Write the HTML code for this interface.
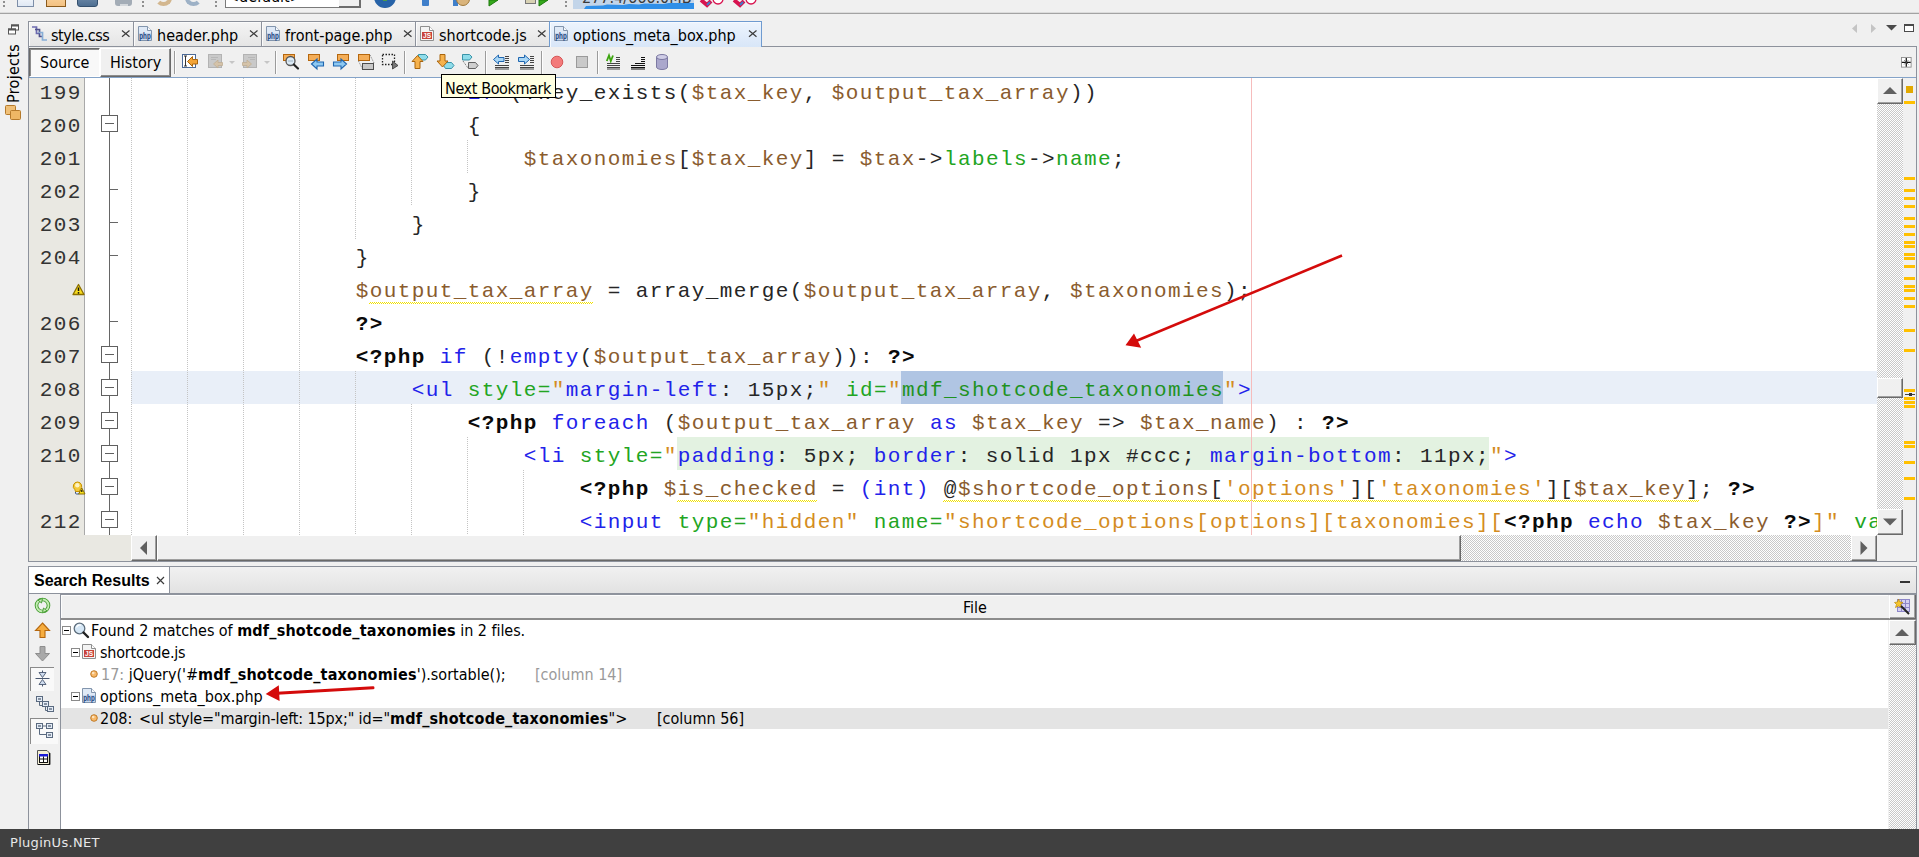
<!DOCTYPE html>
<html lang="en">
<head>
<meta charset="utf-8">
<title>NetBeans - options_meta_box.php</title>
<style>
*{box-sizing:border-box;margin:0;padding:0}
html,body{width:1919px;height:857px;overflow:hidden;background:#f0f0f0}
body{position:relative;font-family:"DejaVu Sans Condensed","Liberation Sans",sans-serif;font-size:16px;color:#000}
.abs{position:absolute}
.ui{font-family:"DejaVu Sans Condensed","Liberation Sans",sans-serif;font-size:16px;white-space:pre;line-height:20px}
.chk{background:repeating-conic-gradient(#ffffff 0% 25%,#c9c9c9 0% 50%) 0 0/2px 2px}
/* top tool bar remnants */
#topline{left:0;top:12px;width:1919px;height:2px;background:#a3a3a3;border-top:1px solid #dcdcdc}
/* tabs */
.tab{position:absolute;top:21px;height:25px;border:1px solid #8d929c;border-bottom:none;background:linear-gradient(#f4f4f4,#e5e5e5);box-shadow:inset 1px 1px 0 #fbfbfb}
.tab.sel{height:26px;background:linear-gradient(#edf4fd,#d8e6f8);border-color:#6f9bd0;box-shadow:inset 1px 1px 0 #f6faff}
.tab .lbl{position:absolute;top:2px;white-space:pre;line-height:20px}
.tab .x{position:absolute;top:6px;width:9px;height:9px}
/* editor */
#editor{left:29px;top:78px;width:1848px;height:457px;background:#fff;overflow:hidden}
#gutter{left:0;top:0;width:55px;height:457px;background:#e9e8e2}
.ln{position:absolute;left:0;width:1848px;height:33px;font-family:"Liberation Mono",monospace;font-size:21px;letter-spacing:1.4px;line-height:33px}
.num{position:absolute;top:3px;left:10.7px;width:44px;line-height:33px;height:33px;color:#333;white-space:pre}
.code{position:absolute;left:102.7px;top:3px;height:33px;white-space:pre;color:#262626}
.v{color:#8a5c2e}.k{color:#2222ea}.g{color:#22a522}.g2{color:#1f921f}.s{color:#d48c22}.b{font-weight:bold;color:#0a0a0a}
.guide{position:absolute;width:1px;background-image:linear-gradient(#c4c4c4 50%,transparent 50%);background-size:1px 2px}
.fold{position:absolute;top:8px;left:72px;width:17px;height:17px;border:1px solid #606060;background:#fff}
.fold:after{content:"";position:absolute;left:3px;top:7px;width:9px;height:1px;background:#606060}
.tick{position:absolute;top:16px;left:80px;width:9px;height:1px;background:#666}
.wavy{position:absolute;height:2px;background:repeating-conic-gradient(#f2e200 0% 25%,transparent 0% 50%) 0 0/2px 2px}
.row{line-height:22px;height:22px}
.row b{font-weight:bold;letter-spacing:0.19px}
.rb{background:#f0f0f0;border-top:1px solid #fff;border-left:1px solid #fff;border-right:1px solid #696969;border-bottom:1px solid #696969;box-shadow:inset -1px -1px 0 #a0a0a0}
</style>
</head>
<body>
<!-- TOPBAR -->
<div class="abs" id="topbar" style="left:0;top:0;width:1919px;height:12px;overflow:hidden">
<div class="abs" style="left:3px;top:1px;width:2px;height:2px;background:#8f8f8f"></div><div class="abs" style="left:3px;top:5px;width:2px;height:2px;background:#8f8f8f"></div>
<div class="abs" style="left:17px;top:-9px;width:17px;height:16px;border:1px solid #7d8ea8;background:linear-gradient(#ffffff,#dfe8f4)"></div>
<div class="abs" style="left:46px;top:-9px;width:20px;height:16px;border:1px solid #8a5a1c;background:linear-gradient(#fbd9a6,#f3c182)"></div>
<div class="abs" style="left:77px;top:-9px;width:21px;height:16px;border:1px solid #34506e;border-radius:0 0 3px 3px;background:linear-gradient(#7d98b5,#4f6f92)"></div>
<div class="abs" style="left:115px;top:-9px;width:17px;height:15px;border-radius:0 0 3px 3px;background:#a3acb6"></div><div class="abs" style="left:120px;top:4px;width:8px;height:2px;background:#d4d8dc"></div>
<div class="abs" style="left:142px;top:1px;width:2px;height:2px;background:#8f8f8f"></div><div class="abs" style="left:142px;top:5px;width:2px;height:2px;background:#8f8f8f"></div>
<div class="abs" style="left:155px;top:-10px;width:17px;height:16px;border:4px solid #d3b78f;border-radius:50%;border-left-color:transparent;border-top-color:transparent"></div>
<div class="abs" style="left:185px;top:-10px;width:17px;height:16px;border:4px solid #9db1c6;border-radius:50%;border-right-color:transparent;border-top-color:transparent"></div>
<div class="abs" style="left:215px;top:1px;width:2px;height:2px;background:#8f8f8f"></div><div class="abs" style="left:215px;top:5px;width:2px;height:2px;background:#8f8f8f"></div>
<div class="abs" style="left:225px;top:-12px;width:136px;height:20px;border:1px solid #7a7a7a;background:#fff"></div>
<div class="abs ui" style="left:227px;top:-13px;color:#000">&lt;default&gt;</div>
<div class="abs" style="left:339px;top:-10px;width:22px;height:18px;background:#f0f0f0;border-right:2px solid #6d6d6d;border-bottom:2px solid #6d6d6d"></div>
<div class="abs" style="left:374px;top:-14px;width:22px;height:22px;border-radius:50%;background:radial-gradient(circle at 50% 40%,#4b9a4a 0 35%,#2763a8 36% 70%,#17396e 100%)"></div>
<div class="abs" style="left:422px;top:0;width:7px;height:6px;background:#3f7fca;border-radius:0 0 1px 1px"></div>
<div class="abs" style="left:453px;top:0;width:5px;height:6px;background:#3f7fca"></div><div class="abs" style="left:456px;top:-8px;width:14px;height:14px;border-radius:0 0 9px 9px;background:#d9b47c;border:1px solid #a07a3c"></div>
<svg class="abs" style="left:486px;top:0" width="14" height="8" viewBox="0 0 14 8"><path d="M3 0 L3 6 L12 0 Z" fill="#35a91b" stroke="#1f7a0e" stroke-width="1"/></svg>
<div class="abs" style="left:525px;top:-6px;width:11px;height:10px;background:#d8d2b4;border:1px solid #777"></div>
<svg class="abs" style="left:536px;top:0" width="14" height="8" viewBox="0 0 14 8"><path d="M3 0 L3 6 L12 0 Z" fill="#35a91b" stroke="#1f7a0e" stroke-width="1"/></svg>
<div class="abs" style="left:565px;top:1px;width:2px;height:2px;background:#8f8f8f"></div><div class="abs" style="left:565px;top:5px;width:2px;height:2px;background:#8f8f8f"></div>
<div class="abs" style="left:573px;top:0;width:121px;height:9px;background:#c3d5e9;overflow:hidden">
<svg class="abs" style="left:0;top:0" width="121" height="9" viewBox="0 0 121 9"><path d="M11 9 L13 6 L30 5.500 L34 4.500 L50 5 L56 4 L66 4.500 L72 3.500 L90 4 L96 3 L121 3 L121 9 Z" fill="#2f8fe8"/></svg>
<div class="abs ui" style="left:9px;top:-12px;color:#3a3a3a;font-size:16px">277.4/666.0MB</div></div>
<svg class="abs" style="left:698px;top:0" width="60" height="10" viewBox="0 0 60 10"><path d="M3 0 L9 5 L13 1" fill="none" stroke="#d8134f" stroke-width="4"/><circle cx="20" cy="-1" r="5" fill="#fff" stroke="#d8134f" stroke-width="1.3"/><path d="M36 0 L42 5 L46 1" fill="none" stroke="#d8134f" stroke-width="4"/><circle cx="53" cy="-1" r="5" fill="#fff" stroke="#d8134f" stroke-width="1.3"/><path d="M9 5 l3 -3" stroke="#3f7fca" stroke-width="2"/><path d="M42 5 l3 -3" stroke="#3f7fca" stroke-width="2"/></svg>
</div>
<div class="abs" id="topline"></div>
<!-- SIDEBAR -->
<div class="abs" id="sidebar" style="left:0;top:14px;width:28px;height:815px">
<svg class="abs" style="left:7px;top:10px" width="13" height="12" viewBox="0 0 13 12"><rect x="4.5" y="1" width="7" height="5" fill="#fff" stroke="#555" stroke-width="1"/><rect x="4" y="0.5" width="8" height="2" fill="#555"/><rect x="1.5" y="5" width="7" height="5" fill="#fff" stroke="#555" stroke-width="1"/><rect x="1" y="4.5" width="8" height="2" fill="#555"/></svg>
<div class="abs ui" style="left:4px;top:89px;width:60px;transform-origin:0 0;transform:rotate(-90deg);line-height:20px;letter-spacing:0.3px">Projects</div>
<svg class="abs" style="left:4px;top:90px" width="18" height="17" viewBox="0 0 18 17"><rect x="1.5" y="1.5" width="10" height="9" rx="1" fill="#f0c078" stroke="#b57a2b"/><rect x="6.5" y="6.5" width="10" height="9" rx="1" fill="#eeb765" stroke="#b57a2b"/></svg>
</div>
<!-- TABS -->
<div class="abs" style="left:28px;top:46px;width:1889px;height:1px;background:#8d929c"></div>
<div class="tab" style="left:28px;width:106px"></div>
<svg class="abs" style="left:31px;top:25px" width="17" height="17" viewBox="0 0 17 17"><path d="M1 2 H5.500 V8.500 H8" fill="none" stroke="#6d6bb0" stroke-width="1.700"/><path d="M4 4.500 H8.500 V11.500 H11.500" fill="none" stroke="#4f4f8a" stroke-width="1.700"/><path d="M7.500 7.500 H11.500 V15 H16" fill="none" stroke="#86add6" stroke-width="1.700"/></svg>
<div class="abs ui tabl" style="left:51px;top:26px;letter-spacing:-0.4px">style.css</div>
<svg class="abs" style="left:121px;top:29px" width="10" height="9" viewBox="0 0 10 9"><path d="M1 1.500 L8.500 7.800 M8.500 1.500 L1 7.800" stroke="#3c3c3c" stroke-width="1.200" fill="none"/></svg>
<div class="tab" style="left:133px;width:129px"></div>
<svg class="abs" style="left:138px;top:26px" width="15" height="16" viewBox="0 0 15 16"><path d="M0.5 0.5 H9.5 L13.5 4.5 V14.5 H0.5 Z" fill="#dfe9f6" stroke="#8295ad"/><path d="M9.5 0.5 V4.5 H13.5" fill="#f7fafd" stroke="#8295ad"/><rect x="1" y="7" width="12" height="7" fill="#c6d6ec"/><text x="7" y="13.300" font-family="Liberation Sans,sans-serif" font-size="8.500" font-weight="bold" fill="#24467f" text-anchor="middle" textLength="11.500" lengthAdjust="spacingAndGlyphs">php</text></svg>
<div class="abs ui tabl" style="left:157px;top:26px">header.php</div>
<svg class="abs" style="left:249px;top:29px" width="10" height="9" viewBox="0 0 10 9"><path d="M1 1.500 L8.500 7.800 M8.500 1.500 L1 7.800" stroke="#3c3c3c" stroke-width="1.200" fill="none"/></svg>
<div class="tab" style="left:261px;width:155px"></div>
<svg class="abs" style="left:266px;top:26px" width="15" height="16" viewBox="0 0 15 16"><path d="M0.5 0.5 H9.5 L13.5 4.5 V14.5 H0.5 Z" fill="#dfe9f6" stroke="#8295ad"/><path d="M9.5 0.5 V4.5 H13.5" fill="#f7fafd" stroke="#8295ad"/><rect x="1" y="7" width="12" height="7" fill="#c6d6ec"/><text x="7" y="13.300" font-family="Liberation Sans,sans-serif" font-size="8.500" font-weight="bold" fill="#24467f" text-anchor="middle" textLength="11.500" lengthAdjust="spacingAndGlyphs">php</text></svg>
<div class="abs ui tabl" style="left:285px;top:26px">front-page.php</div>
<svg class="abs" style="left:403px;top:29px" width="10" height="9" viewBox="0 0 10 9"><path d="M1 1.500 L8.500 7.800 M8.500 1.500 L1 7.800" stroke="#3c3c3c" stroke-width="1.200" fill="none"/></svg>
<div class="tab" style="left:415px;width:135px"></div>
<svg class="abs" style="left:420px;top:26px" width="15" height="16" viewBox="0 0 15 16"><path d="M0.5 0.5 H9.5 L13.5 4.5 V14.5 H0.5 Z" fill="#f4f4f4" stroke="#8f8f8f"/><path d="M9.5 0.5 V4.5 H13.5" fill="#fff" stroke="#8f8f8f"/><rect x="2" y="6" width="10" height="7" fill="#c9433a"/><text x="7" y="12" font-family="Liberation Sans,sans-serif" font-size="6.5" font-weight="bold" fill="#fff" text-anchor="middle" textLength="8">JS</text></svg>
<div class="abs ui tabl" style="left:439px;top:26px">shortcode.js</div>
<svg class="abs" style="left:537px;top:29px" width="10" height="9" viewBox="0 0 10 9"><path d="M1 1.500 L8.500 7.800 M8.500 1.500 L1 7.800" stroke="#3c3c3c" stroke-width="1.200" fill="none"/></svg>
<div class="tab sel" style="left:549px;width:213px"></div>
<svg class="abs" style="left:554px;top:26px" width="15" height="16" viewBox="0 0 15 16"><path d="M0.5 0.5 H9.5 L13.5 4.5 V14.5 H0.5 Z" fill="#dfe9f6" stroke="#8295ad"/><path d="M9.5 0.5 V4.5 H13.5" fill="#f7fafd" stroke="#8295ad"/><rect x="1" y="7" width="12" height="7" fill="#c6d6ec"/><text x="7" y="13.300" font-family="Liberation Sans,sans-serif" font-size="8.500" font-weight="bold" fill="#24467f" text-anchor="middle" textLength="11.500" lengthAdjust="spacingAndGlyphs">php</text></svg>
<div class="abs ui tabl" style="left:573px;top:26px">options_meta_box.php</div>
<svg class="abs" style="left:748px;top:29px" width="10" height="9" viewBox="0 0 10 9"><path d="M1 1.500 L8.500 7.800 M8.500 1.500 L1 7.800" stroke="#3c3c3c" stroke-width="1.200" fill="none"/></svg>
<svg class="abs" style="left:1848px;top:22px" width="70" height="14" viewBox="0 0 70 14"><path d="M9 2 L4 6.5 L9 11 Z" fill="#c4c4c4"/><path d="M23 2 L28 6.5 L23 11 Z" fill="#c4c4c4"/><path d="M38 3 H49 L43.5 8.5 Z" fill="#4a4a4a"/><rect x="56.500" y="2.500" width="9" height="7" fill="#fff" stroke="#4a4a4a"/><rect x="56" y="2" width="10" height="2" fill="#4a4a4a"/></svg>
<!-- EDTOOLBAR -->
<div class="abs" style="left:28px;top:77px;width:1889px;height:1px;background:#84a3c8"></div>
<div class="abs" style="left:29px;top:48px;width:71px;height:29px;background:#f8f8f8;border-top:1px solid #696969;border-left:1px solid #696969;border-right:1px solid #fff;border-bottom:1px solid #fff;box-shadow:inset 1px 1px 0 #8c8c8c"></div>
<div class="abs ui" style="left:40px;top:53px">Source</div>
<div class="abs" style="left:100px;top:48px;width:71px;height:29px;background:#f0f0f0;border-top:1px solid #fff;border-left:1px solid #fff;border-right:1px solid #696969;border-bottom:1px solid #696969;box-shadow:inset -1px -1px 0 #8c8c8c"></div>
<div class="abs ui" style="left:110px;top:53px">History</div>
<div class="abs" style="left:174px;top:51px;width:1px;height:23px;background:#9b9b9b"></div><div class="abs" style="left:175px;top:51px;width:1px;height:23px;background:#fdfdfd"></div>
<div class="abs" style="left:275px;top:51px;width:1px;height:23px;background:#9b9b9b"></div><div class="abs" style="left:276px;top:51px;width:1px;height:23px;background:#fdfdfd"></div>
<div class="abs" style="left:404px;top:51px;width:1px;height:23px;background:#9b9b9b"></div><div class="abs" style="left:405px;top:51px;width:1px;height:23px;background:#fdfdfd"></div>
<div class="abs" style="left:485px;top:51px;width:1px;height:23px;background:#9b9b9b"></div><div class="abs" style="left:486px;top:51px;width:1px;height:23px;background:#fdfdfd"></div>
<div class="abs" style="left:541px;top:51px;width:1px;height:23px;background:#9b9b9b"></div><div class="abs" style="left:542px;top:51px;width:1px;height:23px;background:#fdfdfd"></div>
<div class="abs" style="left:597px;top:51px;width:1px;height:23px;background:#9b9b9b"></div><div class="abs" style="left:598px;top:51px;width:1px;height:23px;background:#fdfdfd"></div>
<svg class="abs" style="left:180px;top:52px" width="500" height="20" viewBox="0 0 500 20">
<!-- last edit -->
<rect x="2.5" y="2.5" width="13" height="13" fill="#fff" stroke="#4b6a97"/><path d="M5.5 4 V14 M4 4 H7 M4 14 H7" stroke="#333" stroke-width="1" fill="none"/><path d="M7.5 9.5 L12.5 4.5 V7.5 H17.5 V12 H12.5 V14.5 Z" fill="#f3a437" stroke="#a9650d" stroke-width="1"/>
<!-- disabled back -->
<rect x="28.500" y="2.500" width="13" height="13" fill="#c9c9c9" stroke="#b3b3b3"/><path d="M31 5.500 H38 M31 7.500 H36" stroke="#b7b7b7"/><path d="M33.500 12 L38 8 V10.500 H42.500 V13.500 H38 V16 Z" fill="#d5c3a9" stroke="#c0ae94" stroke-width="0.8"/><path d="M49 9 H55 L52 12 Z" fill="#c6c6c6"/>
<!-- disabled forward -->
<rect x="63.500" y="2.500" width="13" height="13" fill="#c9c9c9" stroke="#b3b3b3"/><path d="M68 5.500 H75 M70 7.500 H75" stroke="#b7b7b7"/><path d="M71.500 12 L67 8 V10.500 H62.500 V13.500 H67 V16 Z" fill="#d5c3a9" stroke="#c0ae94" stroke-width="0.8"/><path d="M84 9 H90 L87 12 Z" fill="#c6c6c6"/>
<!-- find selection -->
<rect x="103.500" y="2.500" width="11" height="6" fill="#f4ad57" stroke="#b5670e"/><circle cx="110.500" cy="9" r="4.500" fill="#dceaf5" stroke="#565656" stroke-width="1.3"/><path d="M108 9 H113" stroke="#9fb4c4"/><path d="M113.800 12.500 L118 16.500" stroke="#222" stroke-width="2.200" stroke-linecap="round"/>
<!-- prev -->
<rect x="128.500" y="2.500" width="11" height="6" fill="#f4ad57" stroke="#b5670e"/><path d="M131.500 12 L137 7 V10 H143.500 V14 H137 V17 Z" fill="#8ec9f2" stroke="#1f66b0" stroke-width="1.100"/>
<!-- next -->
<rect x="157.500" y="2.500" width="11" height="6" fill="#f4ad57" stroke="#b5670e"/><path d="M166.500 12 L161 7 V10 H153.500 V14 H161 V17 Z" fill="#8ec9f2" stroke="#1f66b0" stroke-width="1.100"/>
<!-- toggle highlight -->
<rect x="178.500" y="2.500" width="11" height="6" fill="#f4ad57" stroke="#b5670e"/><rect x="182.500" y="11.500" width="11" height="6" fill="#c8c8c8" stroke="#4d4d4d"/><path d="M178.500 9 L182.500 17 M190 3 L194 11" stroke="#555" stroke-width="0.8" stroke-dasharray="1 1"/>
<!-- rect select -->
<rect x="202.500" y="2.500" width="12" height="10" fill="none" stroke="#222" stroke-width="1.300" stroke-dasharray="1.500 1.500"/><path d="M212.500 9 V17 L218 13.500 Z" fill="#777" stroke="#333" stroke-width="0.8"/>
<!-- prev bookmark -->
<path d="M238.500 2.500 H245.500 L248 5 L245.500 8 H238.500 Z" fill="#8fdcea" stroke="#2a8aa0" stroke-width="0.9"/><path d="M237.500 3.500 L243 9.500 H240 V16.500 H235 V9.500 H232 Z" fill="#f6b24c" stroke="#a9650d" stroke-width="1"/>
<!-- next bookmark -->
<path d="M265.500 10.500 H271.500 L274 13.500 L271.500 16.500 H265.500 L263.500 13.500 Z" fill="#8fdcea" stroke="#2a8aa0" stroke-width="0.9"/><path d="M260 2.500 H265 V9 H268 L262.500 15 L257 9 H260 Z" fill="#f6b24c" stroke="#a9650d" stroke-width="1"/>
<!-- toggle bookmark -->
<path d="M282.500 2.500 H289.500 L292 5 L289.500 8 H282.500 Z" fill="#8fdcea" stroke="#2a8aa0" stroke-width="0.9"/><path d="M288.500 10.500 H295.500 L298 13.500 L295.500 16.500 H288.500 Z" fill="#cfcfcf" stroke="#555" stroke-width="0.9"/><path d="M283 9 L288 16" stroke="#555" stroke-width="0.9" stroke-dasharray="1 1"/>
<!-- shift left -->
<path d="M325 4.500 H329 M325 6.500 H329 M325 8.500 H329 M325 10.500 H329 M315 13.500 H329 M315 15.500 H329 M315 17 H329" stroke="#444" stroke-width="1"/><path d="M313.500 7.500 L318.500 3 V5.500 H324 V9.500 H318.500 V12 Z" fill="#a9d6f5" stroke="#1f66b0" stroke-width="1"/>
<!-- shift right -->
<path d="M350 4.500 H354 M350 6.500 H354 M350 8.500 H354 M350 10.500 H354 M340 13.500 H354 M340 15.500 H354 M340 17 H354" stroke="#444" stroke-width="1"/><path d="M349.500 7.500 L344.500 3 V5.500 H338.500 V9.500 H344.500 V12 Z" fill="#a9d6f5" stroke="#1f66b0" stroke-width="1"/>
<!-- record -->
<circle cx="377" cy="10" r="5.800" fill="#f37a7a" stroke="#d65757" stroke-width="1"/>
<!-- stop -->
<rect x="396.500" y="4.500" width="11" height="11" fill="#c9c9c9" stroke="#9a9a9a"/>
<!-- comment -->
<path d="M427 11.500 H440 M427 13.500 H440 M427 15.500 H440 M427 17 H440 M436 5.500 H440 M436 7.500 H440 M436 9.500 H440" stroke="#444" stroke-width="1"/><path d="M426.800 9 L429 3.500 L430.800 9 L433 3.500" fill="none" stroke="#3ca50f" stroke-width="1.800"/>
<!-- uncomment -->
<path d="M451 13.500 H465 M451 15.500 H465 M451 17 H465 M455 11.500 H465 M461 5.500 H465 M461 7.500 H465 M461 9.500 H465" stroke="#111" stroke-width="1.200"/>
<!-- db -->
<path d="M476.500 5 V15 A5.500 2.500 0 0 0 487.500 15 V5" fill="#aaa7cc" stroke="#7d7aa3"/><ellipse cx="482" cy="5" rx="5.500" ry="2.500" fill="#cfcde6" stroke="#7d7aa3"/>
</svg>
<svg class="abs" style="left:1901px;top:57px" width="11" height="11" viewBox="0 0 12.500 12.500"><rect x="0.5" y="0.500" width="11" height="11" fill="#fff" stroke="#8a8a8a"/><path d="M6 1 V11 M1 6 H11" stroke="#111" stroke-width="1.400"/><path d="M3.500 3.500 L8.500 8.500 M8.500 3.500 L3.500 8.500" stroke="#555" stroke-width="0.8"/></svg>
<!-- EDITOR -->
<div class="abs" id="editor">
<div class="abs" style="left:102px;top:293px;width:1750px;height:33px;background:#e9eff8"></div>
<div class="abs" style="left:872px;top:293px;width:322px;height:33px;background:#b0c5e3"></div>
<div class="abs" style="left:648px;top:359px;width:812px;height:33px;background:#e3f2e1"></div>
<div class="abs" id="gutter"></div>
<div class="abs" style="left:55px;top:0;width:1px;height:457px;background:#a9a9a9"></div>
<div class="abs" style="left:80px;top:0;width:1px;height:457px;background:#666"></div>
<div class="guide" style="left:102px;top:0px;height:457px"></div>
<div class="guide" style="left:158px;top:0px;height:457px"></div>
<div class="guide" style="left:214px;top:0px;height:457px"></div>
<div class="guide" style="left:270px;top:0px;height:457px"></div>
<div class="guide" style="left:326px;top:0px;height:161px"></div>
<div class="guide" style="left:382px;top:0px;height:128px"></div>
<div class="guide" style="left:438px;top:62px;height:33px"></div>
<div class="guide" style="left:326px;top:293px;height:164px"></div>
<div class="guide" style="left:382px;top:326px;height:131px"></div>
<div class="guide" style="left:438px;top:359px;height:98px"></div>
<div class="guide" style="left:494px;top:392px;height:65px"></div>
<div class="ln" style="top:-4px">
<span class="num">199</span>
<span class="code">                        <span class="k">if</span> (!key_exists(<span class="v">$tax_key</span>, <span class="v">$output_tax_array</span>))</span>
</div>
<div class="ln" style="top:29px">
<span class="num">200</span>
<span class="fold"></span>
<span class="code">                        {</span>
</div>
<div class="ln" style="top:62px">
<span class="num">201</span>
<span class="code">                            <span class="v">$taxonomies</span>[<span class="v">$tax_key</span>] = <span class="v">$tax</span>-&gt;<span class="g">labels</span>-&gt;<span class="g">name</span>;</span>
</div>
<div class="ln" style="top:95px">
<span class="num">202</span>
<span class="tick"></span>
<span class="code">                        }</span>
</div>
<div class="ln" style="top:128px">
<span class="num">203</span>
<span class="tick"></span>
<span class="code">                    }</span>
</div>
<div class="ln" style="top:161px">
<span class="num">204</span>
<span class="tick"></span>
<span class="code">                }</span>
</div>
<div class="ln" style="top:194px">
<span class="code">                <span class="v">$output_tax_array</span> = array_merge(<span class="v">$output_tax_array</span>, <span class="v">$taxonomies</span>);</span>
</div>
<div class="ln" style="top:227px">
<span class="num">206</span>
<span class="tick"></span>
<span class="code">                <span class="b">?&gt;</span></span>
</div>
<div class="ln" style="top:260px">
<span class="num">207</span>
<span class="fold"></span>
<span class="code">                <span class="b">&lt;?php</span> <span class="k">if</span> (!<span class="k">empty</span>(<span class="v">$output_tax_array</span>)): <span class="b">?&gt;</span></span>
</div>
<div class="ln" style="top:293px">
<span class="num">208</span>
<span class="fold"></span>
<span class="code">                    <span class="k">&lt;ul</span> <span class="g">style=</span><span class="s">"</span><span class="k">margin-left</span>: 15px;<span class="s">"</span> <span class="g">id=</span><span class="s">"</span><span class="g2">mdf_shotcode_taxonomies</span><span class="s">"</span><span class="k">&gt;</span></span>
</div>
<div class="ln" style="top:326px">
<span class="num">209</span>
<span class="fold"></span>
<span class="code">                        <span class="b">&lt;?php</span> <span class="k">foreach</span> (<span class="v">$output_tax_array</span> <span class="k">as</span> <span class="v">$tax_key</span> =&gt; <span class="v">$tax_name</span>) : <span class="b">?&gt;</span></span>
</div>
<div class="ln" style="top:359px">
<span class="num">210</span>
<span class="fold"></span>
<span class="code">                            <span class="k">&lt;li</span> <span class="g">style=</span><span class="s">"</span><span class="k">padding</span>: 5px; <span class="k">border</span>: solid 1px #ccc; <span class="k">margin-bottom</span>: 11px;<span class="s">"</span><span class="k">&gt;</span></span>
</div>
<div class="ln" style="top:392px">
<span class="fold"></span>
<span class="code">                                <span class="b">&lt;?php</span> <span class="v">$is_checked</span> = <span class="k">(int)</span> @<span class="v">$shortcode_options</span>[<span class="s">'options'</span>][<span class="s">'taxonomies'</span>][<span class="v">$tax_key</span>]; <span class="b">?&gt;</span></span>
</div>
<div class="ln" style="top:425px">
<span class="num">212</span>
<span class="fold"></span>
<span class="code">                                <span class="k">&lt;input</span> <span class="g">type=</span><span class="s">"hidden"</span> <span class="g">name=</span><span class="s">"shortcode_options[options][taxonomies][</span><span class="b">&lt;?php</span> <span class="k">echo</span> <span class="v">$tax_key</span> <span class="b">?&gt;</span><span class="s">]"</span> <span class="g">value=</span><span class="s">"1"</span></span>
</div>
<div class="wavy" style="left:340px;top:224px;width:224px"></div>
<div class="wavy" style="left:648px;top:422px;width:140px"></div>
<div class="wavy" style="left:914px;top:422px;width:756px"></div>
<div class="abs" style="left:1222px;top:0;width:1px;height:457px;background:#f6bcbc"></div>
<svg class="abs" style="left:43px;top:205px" width="13" height="13" viewBox="0 0 13 13"><path d="M6.500 1.500 L12 11.500 H1 Z" fill="#f8dc1e" stroke="#8c6f00" stroke-width="1.300" stroke-linejoin="round"/><path d="M6.500 4.500 V8" stroke="#111" stroke-width="1.500"/><circle cx="6.500" cy="9.800" r="0.9" fill="#111"/></svg>
<svg class="abs" style="left:43px;top:403px" width="14" height="14" viewBox="0 0 14 14"><rect x="3.500" y="9.500" width="4" height="3.500" rx="1" fill="#e8eef8" stroke="#3a5686"/><path d="M5.500 1 A4.300 4.300 0 0 1 8.200 8.600 L7.500 10.500 H3.500 L2.800 8.600 A4.300 4.300 0 0 1 5.500 1 Z" fill="#f3c93a" stroke="#c89400" stroke-width="1"/><circle cx="5.300" cy="4.300" r="2.200" fill="#fdf3c4"/><path d="M9.800 7 L13 13 H6.600 Z" fill="#f8e11e" stroke="#8c6f00" stroke-width="1" stroke-linejoin="round"/><path d="M9.800 9 V11" stroke="#111" stroke-width="1.200"/></svg>
</div>
<!-- /EDITOR -->
<!-- SCROLL -->
<div class="abs chk" style="left:1877px;top:78px;width:26px;height:457px"></div>
<div class="abs rb" style="left:1877px;top:78px;width:26px;height:26px"><svg width="26" height="26" viewBox="0 0 26 26" style="position:absolute;left:-1px;top:-1px"><path d="M6.0 16.0 L13.0 9.0 L20.0 16.0 Z" fill="#606060"/></svg></div>
<div class="abs rb" style="left:1877px;top:509px;width:26px;height:26px"><svg width="26" height="26" viewBox="0 0 26 26" style="position:absolute;left:-1px;top:-1px"><path d="M6.0 9.5 L13.0 16.5 L20.0 9.5 Z" fill="#606060"/></svg></div>
<div class="abs rb" style="left:1877px;top:378px;width:26px;height:20px"></div>
<div class="abs" style="left:1903px;top:78px;width:13px;height:483px;background:#f0f0f0"></div>
<div class="abs" style="left:1906px;top:86px;width:7px;height:7px;background:#e2a900"></div>
<div class="abs" style="left:1904px;top:101px;width:11px;height:3px;background:#ffc000"></div>
<div class="abs" style="left:1904px;top:177px;width:11px;height:3px;background:#ffc000"></div>
<div class="abs" style="left:1904px;top:189px;width:11px;height:3px;background:#ffc000"></div>
<div class="abs" style="left:1904px;top:197px;width:11px;height:3px;background:#ffc000"></div>
<div class="abs" style="left:1904px;top:205px;width:11px;height:3px;background:#ffc000"></div>
<div class="abs" style="left:1904px;top:217px;width:11px;height:3px;background:#ffc000"></div>
<div class="abs" style="left:1904px;top:225px;width:11px;height:3px;background:#ffc000"></div>
<div class="abs" style="left:1904px;top:233px;width:11px;height:3px;background:#ffc000"></div>
<div class="abs" style="left:1904px;top:241px;width:11px;height:3px;background:#ffc000"></div>
<div class="abs" style="left:1904px;top:245px;width:11px;height:3px;background:#ffc000"></div>
<div class="abs" style="left:1904px;top:253px;width:11px;height:3px;background:#ffc000"></div>
<div class="abs" style="left:1904px;top:257px;width:11px;height:3px;background:#ffc000"></div>
<div class="abs" style="left:1904px;top:265px;width:11px;height:3px;background:#ffc000"></div>
<div class="abs" style="left:1904px;top:277px;width:11px;height:3px;background:#ffc000"></div>
<div class="abs" style="left:1904px;top:285px;width:11px;height:3px;background:#ffc000"></div>
<div class="abs" style="left:1904px;top:289px;width:11px;height:3px;background:#ffc000"></div>
<div class="abs" style="left:1904px;top:297px;width:11px;height:3px;background:#ffc000"></div>
<div class="abs" style="left:1904px;top:305px;width:11px;height:3px;background:#ffc000"></div>
<div class="abs" style="left:1904px;top:329px;width:11px;height:3px;background:#ffc000"></div>
<div class="abs" style="left:1904px;top:349px;width:11px;height:3px;background:#ffc000"></div>
<div class="abs" style="left:1904px;top:389px;width:11px;height:3px;background:#ffc000"></div>
<div class="abs" style="left:1904px;top:397px;width:11px;height:3px;background:#ffc000"></div>
<div class="abs" style="left:1904px;top:401px;width:11px;height:3px;background:#ffc000"></div>
<div class="abs" style="left:1904px;top:405px;width:11px;height:3px;background:#ffc000"></div>
<div class="abs" style="left:1904px;top:441px;width:11px;height:3px;background:#ffc000"></div>
<div class="abs" style="left:1904px;top:445px;width:11px;height:3px;background:#ffc000"></div>
<div class="abs" style="left:1904px;top:461px;width:11px;height:3px;background:#ffc000"></div>
<div class="abs" style="left:1904px;top:477px;width:11px;height:3px;background:#ffc000"></div>
<div class="abs" style="left:1904px;top:497px;width:11px;height:3px;background:#ffc000"></div>
<div class="abs" style="left:1905px;top:394px;width:10px;height:1px;background:#444"></div><div class="abs" style="left:1909px;top:393px;width:3px;height:3px;background:#333"></div>
<div class="abs" style="left:29px;top:535px;width:102px;height:26px;background:#e9e8e2"></div>
<div class="abs" style="left:131px;top:535px;width:1785px;height:26px;background:#f0f0f0"></div>
<div class="abs chk" style="left:157px;top:535px;width:1694px;height:26px"></div>
<div class="abs rb" style="left:131px;top:535px;width:26px;height:26px"><svg width="26" height="26" viewBox="0 0 26 26" style="position:absolute;left:-1px;top:-1px"><path d="M16.0 6.0 L9.0 13.0 L16.0 20.0 Z" fill="#606060"/></svg></div>
<div class="abs rb" style="left:1851px;top:535px;width:26px;height:26px"><svg width="26" height="26" viewBox="0 0 26 26" style="position:absolute;left:-1px;top:-1px"><path d="M9.5 6.0 L16.5 13.0 L9.5 20.0 Z" fill="#606060"/></svg></div>
<div class="abs rb" style="left:157px;top:535px;width:1304px;height:26px"></div>
<!-- SEARCH -->
<div class="abs" style="left:28px;top:47px;width:1px;height:515px;background:#8d929c"></div>
<div class="abs" style="left:1916px;top:47px;width:1px;height:515px;background:#8d929c"></div>
<div class="abs" style="left:28px;top:561px;width:1889px;height:1px;background:#8d929c"></div>
<div class="abs" id="search" style="left:28px;top:566px;width:1889px;height:263px;border:1px solid #8d929c;border-bottom:none;background:#f0f0f0">
<div class="abs" style="left:0;top:0;width:1887px;height:26px;background:linear-gradient(#f1f1f1,#e2e2e2)"></div>
<div class="abs" style="left:0;top:26px;width:1887px;height:1px;background:#8d929c"></div>
<div class="abs" style="left:0;top:0;width:141px;height:26px;background:#fff;border-right:1px solid #8d929c"></div>
<div class="abs" style="left:5px;top:4px;font-family:'Liberation Sans',sans-serif;font-weight:bold;font-size:16px;line-height:20px;white-space:pre">Search Results</div>
<svg class="abs" style="left:127px;top:9px" width="9" height="9" viewBox="0 0 9 9"><path d="M1 1 L8 8 M8 1 L1 8" stroke="#3c3c3c" stroke-width="1.200" fill="none"/></svg>
<div class="abs" style="left:1871px;top:14px;width:10px;height:2px;background:#333"></div>
<div class="abs" style="left:31px;top:27px;width:1px;height:236px;background:#8d929c"></div>
<div class="abs" style="left:32px;top:28px;width:1827px;height:23px;background:#f0f0f0;border-top:1px solid #fdfdfd;border-left:1px solid #fdfdfd"></div>
<div class="abs" style="left:32px;top:51px;width:1855px;height:2px;background:#8c8c8c"></div>
<div class="abs ui" style="left:934px;top:31px">File</div>
<div class="abs" style="left:32px;top:53px;width:1827px;height:210px;background:#fff"></div>
<div class="abs" style="left:32px;top:141px;width:1827px;height:21px;background:#e4e4e4"></div>
<svg class="abs" style="left:33px;top:59px" width="9" height="9" viewBox="0 0 9 9"><rect x="0.5" y="0.5" width="8" height="8" fill="#fff" stroke="#8a8a8a"/><path d="M2 4.500 H7" stroke="#000" stroke-width="1"/></svg>
<svg class="abs" style="left:44px;top:55px" width="17" height="17" viewBox="0 0 17 17"><circle cx="6.500" cy="6.500" r="5.300" fill="#d5e7f6" stroke="#5d6d7c" stroke-width="1.300"/><path d="M3.500 5.500 A3.500 3.500 0 0 1 8 3.200" stroke="#fff" stroke-width="1.200" fill="none"/><path d="M10.500 10.500 L15 15" stroke="#222" stroke-width="2.400" stroke-linecap="round"/></svg>
<div class="abs ui row" style="left:62px;top:53px;letter-spacing:-0.05px">Found 2 matches of <b>mdf_shotcode_taxonomies</b> in 2 files.</div>
<svg class="abs" style="left:42px;top:81px" width="9" height="9" viewBox="0 0 9 9"><rect x="0.5" y="0.5" width="8" height="8" fill="#fff" stroke="#8a8a8a"/><path d="M2 4.500 H7" stroke="#000" stroke-width="1"/></svg>
<svg class="abs" style="left:53px;top:77px" width="15" height="16" viewBox="0 0 15 16"><path d="M0.5 0.5 H9.5 L13.5 4.5 V14.5 H0.5 Z" fill="#f4f4f4" stroke="#8f8f8f"/><path d="M9.5 0.5 V4.5 H13.5" fill="#fff" stroke="#8f8f8f"/><rect x="2" y="6" width="10" height="7" fill="#c9433a"/><text x="7" y="12" font-family="Liberation Sans,sans-serif" font-size="6.5" font-weight="bold" fill="#fff" text-anchor="middle" textLength="8">JS</text></svg>
<div class="abs ui row" style="left:71px;top:75px;letter-spacing:-0.2px">shortcode.js</div>
<svg class="abs" style="left:61px;top:103px" width="8" height="8" viewBox="0 0 8 8"><circle cx="4" cy="4" r="3.300" fill="#f8b96a" stroke="#b9711b" stroke-width="0.9"/><circle cx="3.200" cy="3" r="1.300" fill="#fde3bd"/></svg>
<div class="abs ui row" style="left:72px;top:97px;"><span style="color:#9a9a9a">17: </span>jQuery(&#39;#<b>mdf_shotcode_taxonomies</b>&#39;).sortable();</div>
<div class="abs ui row" style="left:506px;top:97px;color:#9a9a9a">[column 14]</div>
<svg class="abs" style="left:42px;top:125px" width="9" height="9" viewBox="0 0 9 9"><rect x="0.5" y="0.5" width="8" height="8" fill="#fff" stroke="#8a8a8a"/><path d="M2 4.500 H7" stroke="#000" stroke-width="1"/></svg>
<svg class="abs" style="left:53px;top:121px" width="15" height="16" viewBox="0 0 15 16"><path d="M0.5 0.5 H9.5 L13.5 4.5 V14.5 H0.5 Z" fill="#dfe9f6" stroke="#8295ad"/><path d="M9.5 0.5 V4.5 H13.5" fill="#f7fafd" stroke="#8295ad"/><rect x="1" y="7" width="12" height="7" fill="#c6d6ec"/><text x="7" y="13.300" font-family="Liberation Sans,sans-serif" font-size="8.500" font-weight="bold" fill="#24467f" text-anchor="middle" textLength="11.500" lengthAdjust="spacingAndGlyphs">php</text></svg>
<div class="abs ui row" style="left:71px;top:119px;">options_meta_box.php</div>
<svg class="abs" style="left:61px;top:147px" width="8" height="8" viewBox="0 0 8 8"><circle cx="4" cy="4" r="3.300" fill="#f8b96a" stroke="#b9711b" stroke-width="0.9"/><circle cx="3.200" cy="3" r="1.300" fill="#fde3bd"/></svg>
<div class="abs ui row" style="left:71px;top:141px;">208: </div>
<div class="abs ui row" style="left:110px;top:141px;letter-spacing:-0.13px">&lt;ul style=&quot;margin-left: 15px;&quot; id=&quot;</div>
<div class="abs ui row" style="left:361px;top:141px;"><b>mdf_shotcode_taxonomies</b>&quot;&gt;</div>
<div class="abs ui row" style="left:628px;top:141px;">[column 56]</div>
<svg class="abs" style="left:5px;top:30px" width="17" height="17" viewBox="0 0 17 17"><circle cx="8.500" cy="8.500" r="6" fill="none" stroke="#3f9a2c" stroke-width="3.600"/><circle cx="8.500" cy="8.500" r="6" fill="none" stroke="#c5ecb4" stroke-width="1.800"/><path d="M4 3 L8.500 1.500 L7.500 6 Z M13 14 L8.500 15.500 L9.500 11 Z" fill="#c5ecb4" stroke="#3f9a2c" stroke-width="0.9"/></svg>
<svg class="abs" style="left:5px;top:55px" width="17" height="17" viewBox="0 0 17 17"><path d="M8.500 1 L15.500 8.500 H11 V15.500 H6 V8.500 H1.500 Z" fill="#f6ad3f" stroke="#b5670e" stroke-width="1.100"/></svg>
<svg class="abs" style="left:5px;top:78px" width="17" height="17" viewBox="0 0 17 17"><path d="M8.500 16 L15.500 8.500 H11 V1.500 H6 V8.500 H1.500 Z" fill="#a9a9a9" stroke="#8e8e8e" stroke-width="1"/></svg>
<div class="abs" style="left:1px;top:100px;width:24px;height:24px;background:#f9f9f9;border-top:1px solid #8a8a8a;border-left:1px solid #8a8a8a"></div>
<svg class="abs" style="left:5px;top:103px" width="17" height="17" viewBox="0 0 17 17"><path d="M1.500 8.500 H15.500" stroke="#4a5870" stroke-width="1"/><path d="M5 2.500 H12 L8.500 7.500 Z M5 14.500 H12 L8.500 9.500 Z" fill="#cfdcee" stroke="#4a5870" stroke-width="0.9"/><path d="M8.500 0.500 V2.500 M8.500 14.500 V16.500" stroke="#4a5870"/></svg>
<svg class="abs" style="left:7px;top:129px" width="18" height="17" viewBox="0 0 18 17"><path d="M3.500 5 V9.500 H8 M9.500 10 V14.500 H13" stroke="#5a6a80" fill="none"/><rect x="0.500" y="0.500" width="6" height="5" fill="#e4ecf6" stroke="#5a6a80"/><rect x="6.500" y="5.500" width="6" height="5" fill="#e4ecf6" stroke="#5a6a80"/><rect x="11.500" y="10.500" width="6" height="5" fill="#e4ecf6" stroke="#5a6a80"/><path d="M2 3 H5 M8 8 H11 M13 13 H16" stroke="#2b3a52"/></svg>
<div class="abs" style="left:1px;top:151px;width:28px;height:26px;background:#f9f9f9;border-top:1px solid #8a8a8a;border-left:1px solid #8a8a8a"></div>
<svg class="abs" style="left:7px;top:156px" width="18" height="16" viewBox="0 0 18 16"><path d="M3.500 5 V11.500 H11 M6 3 H11" stroke="#5a6a80" fill="none"/><rect x="0.500" y="0.500" width="6" height="5" fill="#e4ecf6" stroke="#5a6a80"/><rect x="10.500" y="0.500" width="6" height="5" fill="#e4ecf6" stroke="#5a6a80"/><rect x="10.500" y="9.500" width="6" height="5" fill="#e4ecf6" stroke="#5a6a80"/><path d="M2 3 H5 M12 3 H15 M12 12 H15" stroke="#2b3a52"/></svg>
<svg class="abs" style="left:8px;top:183px" width="14" height="16" viewBox="0 0 14 16"><path d="M0.500 0.500 H10 L13 3.500 V14.500 H0.500 Z" fill="#f4efd6" stroke="#555"/><path d="M12.500 3 V14.500 H1" stroke="#111" stroke-width="1.200" fill="none"/><rect x="2.500" y="5.500" width="8" height="7" fill="#fff" stroke="#111"/><rect x="2" y="4" width="9" height="2.500" fill="#1a1ad8"/><path d="M2.500 9 H10.500 M6.500 6.500 V12.500" stroke="#111"/></svg>
<div class="abs chk" style="left:1860px;top:53px;width:27px;height:210px"></div>
<div class="abs rb" style="left:1860px;top:53px;width:27px;height:25px"><svg width="27" height="25" viewBox="0 0 27 25" style="position:absolute;left:-1px;top:-1px"><path d="M6 16 L13 9 L20 16 Z" fill="#606060"/></svg></div>
<div class="abs rb" style="left:1860px;top:27px;width:27px;height:25px"></div>
<svg class="abs" style="left:1865px;top:31px" width="17" height="17" viewBox="0 0 17 17"><rect x="3.500" y="1.500" width="12" height="12" fill="#d4d0f0" stroke="#8d86c8"/><path d="M3.500 5.500 H15.500 M3.500 9.500 H15.500 M7.500 1.500 V13.500 M11.500 1.500 V13.500" stroke="#8d86c8"/><path d="M4.500 1 L6 4 L9 4.500 L6.500 6.500 L7.500 9.500 L4.500 8 L1.500 9.500 L2.500 6.500 L0.500 4.500 L3.500 4 Z" fill="#f6c52c" stroke="#b98a08" stroke-width="0.7"/><path d="M7 8 L15 16" stroke="#222" stroke-width="2"/></svg>
<div class="abs" style="left:31px;top:27px;width:1856px;height:1px;background:#8f949d"></div>
<!-- SEARCH-ROWS -->
</div>
<div class="abs" style="left:0;top:829px;width:1919px;height:28px;background:#404040"></div>
<div class="abs" style="left:10px;top:833px;font-family:'DejaVu Sans','Liberation Sans',sans-serif;font-size:13px;line-height:20px;color:#e8e8e8;letter-spacing:0.3px;white-space:pre">PluginUs.NET</div>
<!-- FOOTER -->
<div class="abs" id="tooltip" style="left:441px;top:74px;width:115px;height:24px;background:#ffffe1;border:1px solid #000"></div>
<div class="abs ui" style="left:445px;top:79px;letter-spacing:-0.38px">Next Bookmark</div>
<svg class="abs" style="left:0;top:0;pointer-events:none" width="1919" height="857" viewBox="0 0 1919 857"><path d="M1342 255.500 L1136 341" stroke="#d40b0b" stroke-width="2.600" fill="none"/><path d="M1125.500 345.300 L1134 333.600 L1141.200 347.800 Z" fill="#d40b0b"/><path d="M373 687.800 L277 693.300" stroke="#d40b0b" stroke-width="3" fill="none" stroke-linecap="round"/><path d="M265.700 694 L278.800 685.200 L279.600 700.900 Z" fill="#d40b0b"/></svg>
</body>
</html>
